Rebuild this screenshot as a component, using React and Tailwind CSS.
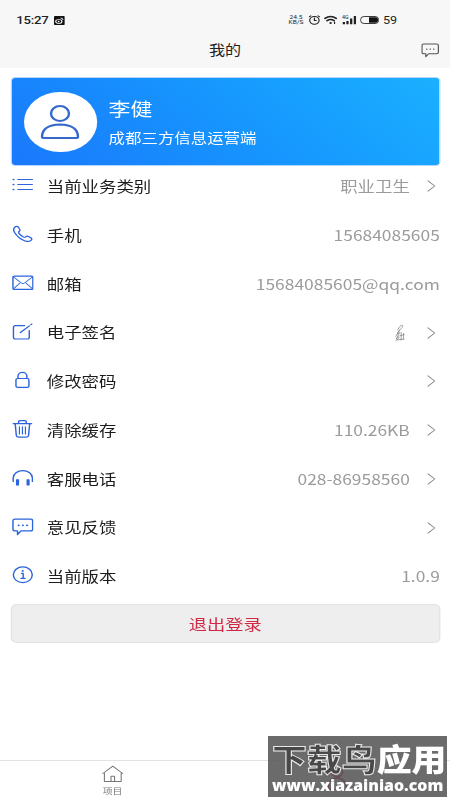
import React from "react";

const iconProps = {
  fill: "none",
  stroke: "currentColor",
  strokeLinecap: "round",
  strokeLinejoin: "round",
};

function Icon({ children, className = "w-[18px] h-[18px]" }) {
  return (
    <svg viewBox="0 0 18 18" className={className} strokeWidth="1.2" {...iconProps}>
      {children}
    </svg>
  );
}

const icons = {
  list: (
    <Icon>
      <path d="M4.8 3.5H17M4.8 8.5H17M4.8 13.5H17" strokeWidth="1" />
      <path d="M1.2 3.5h.1M1.2 8.5h.1M1.2 13.5h.1" strokeWidth="1.7" />
    </Icon>
  ),
  phone: (
    <Icon>
      <path d="M2.2 2.3C3.3 1 4.5 1 5.3 2.2l1.1 2c.6 1 .2 1.7-.5 2.3-.8.7-.5 1.3.1 2.2 1 1.5 2 2.5 3.5 3.3.8.4 1.3.4 1.9-.2.6-.8 1.4-1 2.3-.4l2 1.3c1 .8 1 1.7.1 2.6-1.5 1.6-3.4 1.4-5.4.4C7 14 4 11 2 7.2 1.1 5.3 1.1 3.6 2.2 2.3z" />
    </Icon>
  ),
  mail: (
    <Icon>
      <rect x="0.8" y="2.2" width="16.6" height="13.2" rx="1" />
      <path d="M1.3 3l6.5 6q1.3 1 2.6 0L17 3M1.3 14.8L6.4 9.2M17 14.8l-5.2-5.6" strokeWidth="0.9" />
    </Icon>
  ),
  sign: (
    <Icon>
      <path d="M10.5 2.6H3q-1.8 0-1.8 1.8v9.8Q1.2 16 3 16h9.6q1.8 0 1.8-1.8V7.5M7 9.5l7.5-6.6M15.8 1.7l.7-.6" />
    </Icon>
  ),
  lock: (
    <Icon>
      <rect x="3.3" y="7.5" width="10.8" height="8.8" rx="1.4" />
      <path d="M5 7.3V5a3.7 3.7 0 0 1 7.4 0v2.3" />
    </Icon>
  ),
  trash: (
    <Icon>
      <path d="M1.1 3.7h15.2M5.5 3.5V1.8Q5.5.7 6.8.7h3.8q1.300 0 1.300 1.100v1.700M2.700 4l.9 11.500q.1 1.600 1.600 1.600h7q1.500 0 1.600-1.600L14.700 4" />
      <path d="M6.2 6.800v7.200M8.700 6.800v7.200M11.200 6.800v7.200" strokeWidth="1" />
    </Icon>
  ),
  headset: (
    <Icon>
      <path d="M1 12.5V9a7.9 7.3 0 0 1 16 0v3.5" />
      <path d="M3.9 10.800h1.400V16H3.900zM12.700 10.800h1.400V16h-1.400z" fill="currentColor" />
    </Icon>
  ),
  message: <ChatIcon className="w-[18px] h-[18px]" />,
  info: (
    <Icon>
      <circle cx="9" cy="8.8" r="7.9" />
      <path d="M8 7.3h1.3v5M7.5 12.4h3.3" />
      <path d="M8.9 4.9h.1" strokeWidth="1.7" />
    </Icon>
  ),
};

const rows = [
  { icon: "list", label: "当前业务类别", value: "职业卫生", arrow: true },
  { icon: "phone", label: "手机", value: "15684085605" },
  { icon: "mail", label: "邮箱", value: "15684085605@qq.com" },
  { icon: "sign", label: "电子签名", value: <Signature />, arrow: true },
  { icon: "lock", label: "修改密码", arrow: true },
  { icon: "trash", label: "清除缓存", value: "110.26KB", arrow: true },
  { icon: "headset", label: "客服电话", value: "028-86958560", arrow: true },
  { icon: "message", label: "意见反馈", arrow: true },
  { icon: "info", label: "当前版本", value: "1.0.9" },
];

function ChatIcon({ className }) {
  return (
    <Icon className={className}>
      <path d="M2.5 1.2h13q1.700 0 1.700 1.700v8.300q0 1.700-1.700 1.700H7.500L4.600 16.500v-3.600H2.500Q.8 12.900.8 11.200V2.900q0-1.700 1.700-1.700z" />
      <path d="M5.5 7.3h.1M9 7.3h.1M12.5 7.3h.1" strokeWidth="1.7" />
    </Icon>
  );
}

function Signature() {
  return (
    <svg viewBox="0 0 10 18" className="w-[10px] h-[18px] mr-1 text-[#666]" strokeWidth="0.55" {...iconProps}>
      <path d="M3.5 6C4.5 2.5 6.5.6 7.5 1.6 8.2 3 5.5 5 3.5 8.5M5 6L1.8 12.5M3 10l2-1.5L2.200 15 4.800 12M2 16.500q2-.5 2.500-3M6.300 8.500V16M8.300 9.500V15M5.800 11.500l3-.8M3.500 15.800l5.200-.6" />
    </svg>
  );
}

function StatusBar() {
  return (
    <div className="h-[39px] shrink-0 flex items-center pl-[13.5px] pr-[44px] pt-px text-[#222]">
      <span className="text-[11px] font-[Roboto,sans-serif] font-medium w-[31px] leading-none tracking-[-0.2px]">
        15:27
      </span>
      <svg viewBox="0 0 9 9" className="w-[9px] h-[9px]">
        <rect width="9" height="9" rx="0.8" fill="#111" />
        <ellipse cx="4" cy="5.5" rx="2.6" ry="1.9" fill="none" stroke="#fff" strokeWidth="0.9" />
        <circle cx="3.9" cy="5.5" r="0.7" fill="#fff" />
        <path d="M5.5 2.2q2-.5 1.9 1.8" fill="none" stroke="#fff" strokeWidth="0.8" />
      </svg>
      <div className="ml-auto flex items-center">
        <div className="flex flex-col items-center text-[5.5px] leading-[5px] font-[Roboto,sans-serif] w-[12px] mr-[4px]">
          <span>24.5</span>
          <span>KB/S</span>
        </div>
        <svg viewBox="0 0 10 10" className="w-[10px] h-[10px] mr-[3.5px]" {...iconProps}>
          <circle cx="5" cy="5.3" r="3.9" />
          <path d="M5 3v2.5h1.5M.7 1.8L2 .8M9.3 1.8L8 .8" />
        </svg>
        <svg viewBox="0 0 11 10" className="w-[11px] h-[10px] mr-[4px]" strokeWidth="1.5" {...iconProps}>
          <path d="M.8 3.4q4.7-3.8 9.4 0M2.6 5.7q2.9-2.3 5.8 0" />
          <circle cx="5.5" cy="8" r="1" fill="currentColor" stroke="none" />
          <path d="M8.8 7v1.6" strokeWidth="1" />
        </svg>
        <svg viewBox="0 0 12 10" className="w-[12px] h-[10px] mr-[3px]" fill="currentColor">
          <path d="M.6 7h1.9v2.2H.6zM3.6 6h1.9v3.2H3.6zM6.7 3.5h1.9v5.7H6.7zM9.8 1h1.9v8.2H9.8z" />
          <text x="0" y="4" fontSize="4.5" fontFamily="Roboto">4G</text>
        </svg>
        <svg viewBox="0 0 16 8" className="w-[16px] h-[8px] mr-[3px]">
          <rect x="0.5" y="0.5" width="15" height="7" rx="3" fill="none" stroke="#222" strokeWidth="0.8" />
          <path d="M7.5 1.2h5.5a2 2.8 0 0 1 0 5.6H7.500z" fill="#111" />
        </svg>
        <span className="text-[10.5px] font-[Roboto,sans-serif] leading-[10px] pt-px">59</span>
      </div>
    </div>
  );
}

function Row({ icon, label, value, arrow }) {
  return (
    <div className="h-[48.75px] flex items-center pl-[1px]">
      <span className="w-[29px] text-[#2b64dc] -mt-[2px]">{icons[icon]}</span>
      <span className="text-[14.5px] text-[#1c1c1c] leading-none">{label}</span>
      <span className="ml-auto text-[14.5px] text-[#9b9b9b] leading-none">{value}</span>
      {arrow && (
        <svg viewBox="0 0 7 12" className="w-[7px] h-3 ml-[14px] mr-[4px] text-[#8e8e8e]" {...iconProps}>
          <path d="M.7.8L6.3 6 .7 11.2" />
        </svg>
      )}
    </div>
  );
}

function Watermark() {
  return (
    <div className="absolute left-[268px] top-[736px] w-[179px] h-[61px] pl-[4px] pt-[8px] bg-[#575757]/88 text-white whitespace-nowrap">
      <div className="h-[33px] text-[31px] leading-[28px] font-black origin-left scale-x-[1.125]">
        <span className="text-[#484848] [-webkit-text-stroke:1px_#e8e8e8]">下载鸟</span>
        <span>应用</span>
      </div>
      <div className="text-[15px] leading-[17px] font-extrabold font-['Open_Sans',sans-serif] origin-left scale-x-[1.06]">
        www.xiazainiao.com
      </div>
    </div>
  );
}

function App() {
  return (
    <div className="relative w-[450px] h-[800px] overflow-hidden bg-white font-['Noto_Sans_CJK_SC',sans-serif]">
      <div className="w-[375px] h-[800px] flex flex-col origin-top-left scale-x-120">
        <header className="h-[68px] shrink-0 bg-[#f7f7f7]">
          <StatusBar />
          <div className="h-[22px] grid grid-cols-3 items-center px-[9px] text-[#222]">
            <h1 className="col-start-2 text-center text-[13.4px] leading-none">我的</h1>
            <ChatIcon className="w-[15px] h-[15px] justify-self-end text-[#555]" />
          </div>
        </header>

        <main className="flex-1 pl-[9px] pr-[8.5px] pt-[9px]">
          <section className="h-[89px] rounded-[4px] border-[1.5px] border-[#b5d5fb] bg-linear-45 from-[#1b78fc] to-[#1bb0ff] flex items-center pl-[9.5px] text-white">
            <div className="w-[61px] h-[60px] rounded-full bg-white flex items-center justify-center text-[#3568cc]">
              <svg viewBox="0 0 34 36" className="w-[34px] h-9" strokeWidth="2" {...iconProps}>
                <circle cx="17" cy="9.5" r="7.5" />
                <path d="M2 33q0-12 15-12.5Q32 21 32 33q0 1-1 1H3q-1 0-1-1z" />
              </svg>
            </div>
            <div className="ml-[10px]">
              <div className="text-[18.3px] leading-[24px]">李健</div>
              <div className="text-[13.7px] leading-[20px] mt-[7.5px]">成都三方信息运营端</div>
            </div>
          </section>

          <div className="-mt-[4px]">
            {rows.map((row) => (
              <Row key={row.label} {...row} />
            ))}
          </div>

          <button className="mt-[3.5px] w-full h-[39px] rounded-[5px] border border-[#e2e2e2] bg-[#eeeeee] text-[15.2px] leading-none text-[#cf2945]">
            退出登录
          </button>
        </main>

        <nav className="h-[40px] shrink-0 border-t border-[#e2e2e2] grid grid-cols-2 text-[8.2px] text-[#777]">
          <div className="flex flex-col items-center pt-[4px]">
            <svg viewBox="0 0 18 18" className="w-[18px] h-[18px]" strokeWidth="0.9" {...iconProps}>
              <path d="M.7 8.5L9 1.2l8.3 7.3M2 8v8.5h14V8M7.5 16.5v-5.2h3v5.200" />
            </svg>
            <span className="leading-[12px] mt-px">项目</span>
          </div>
          <div className="flex flex-col items-center pt-[4px] text-[#d8002a]">
            <svg viewBox="0 0 18 26" className="w-[18px] h-[26px]" strokeWidth="1.3" {...iconProps}>
              <circle cx="9" cy="7" r="4.5" />
              <path d="M1.5 24q0-11 7.500-11t7.500 11z" />
            </svg>
          </div>
        </nav>
      </div>
      <Watermark />
    </div>
  );
}

export default App;
